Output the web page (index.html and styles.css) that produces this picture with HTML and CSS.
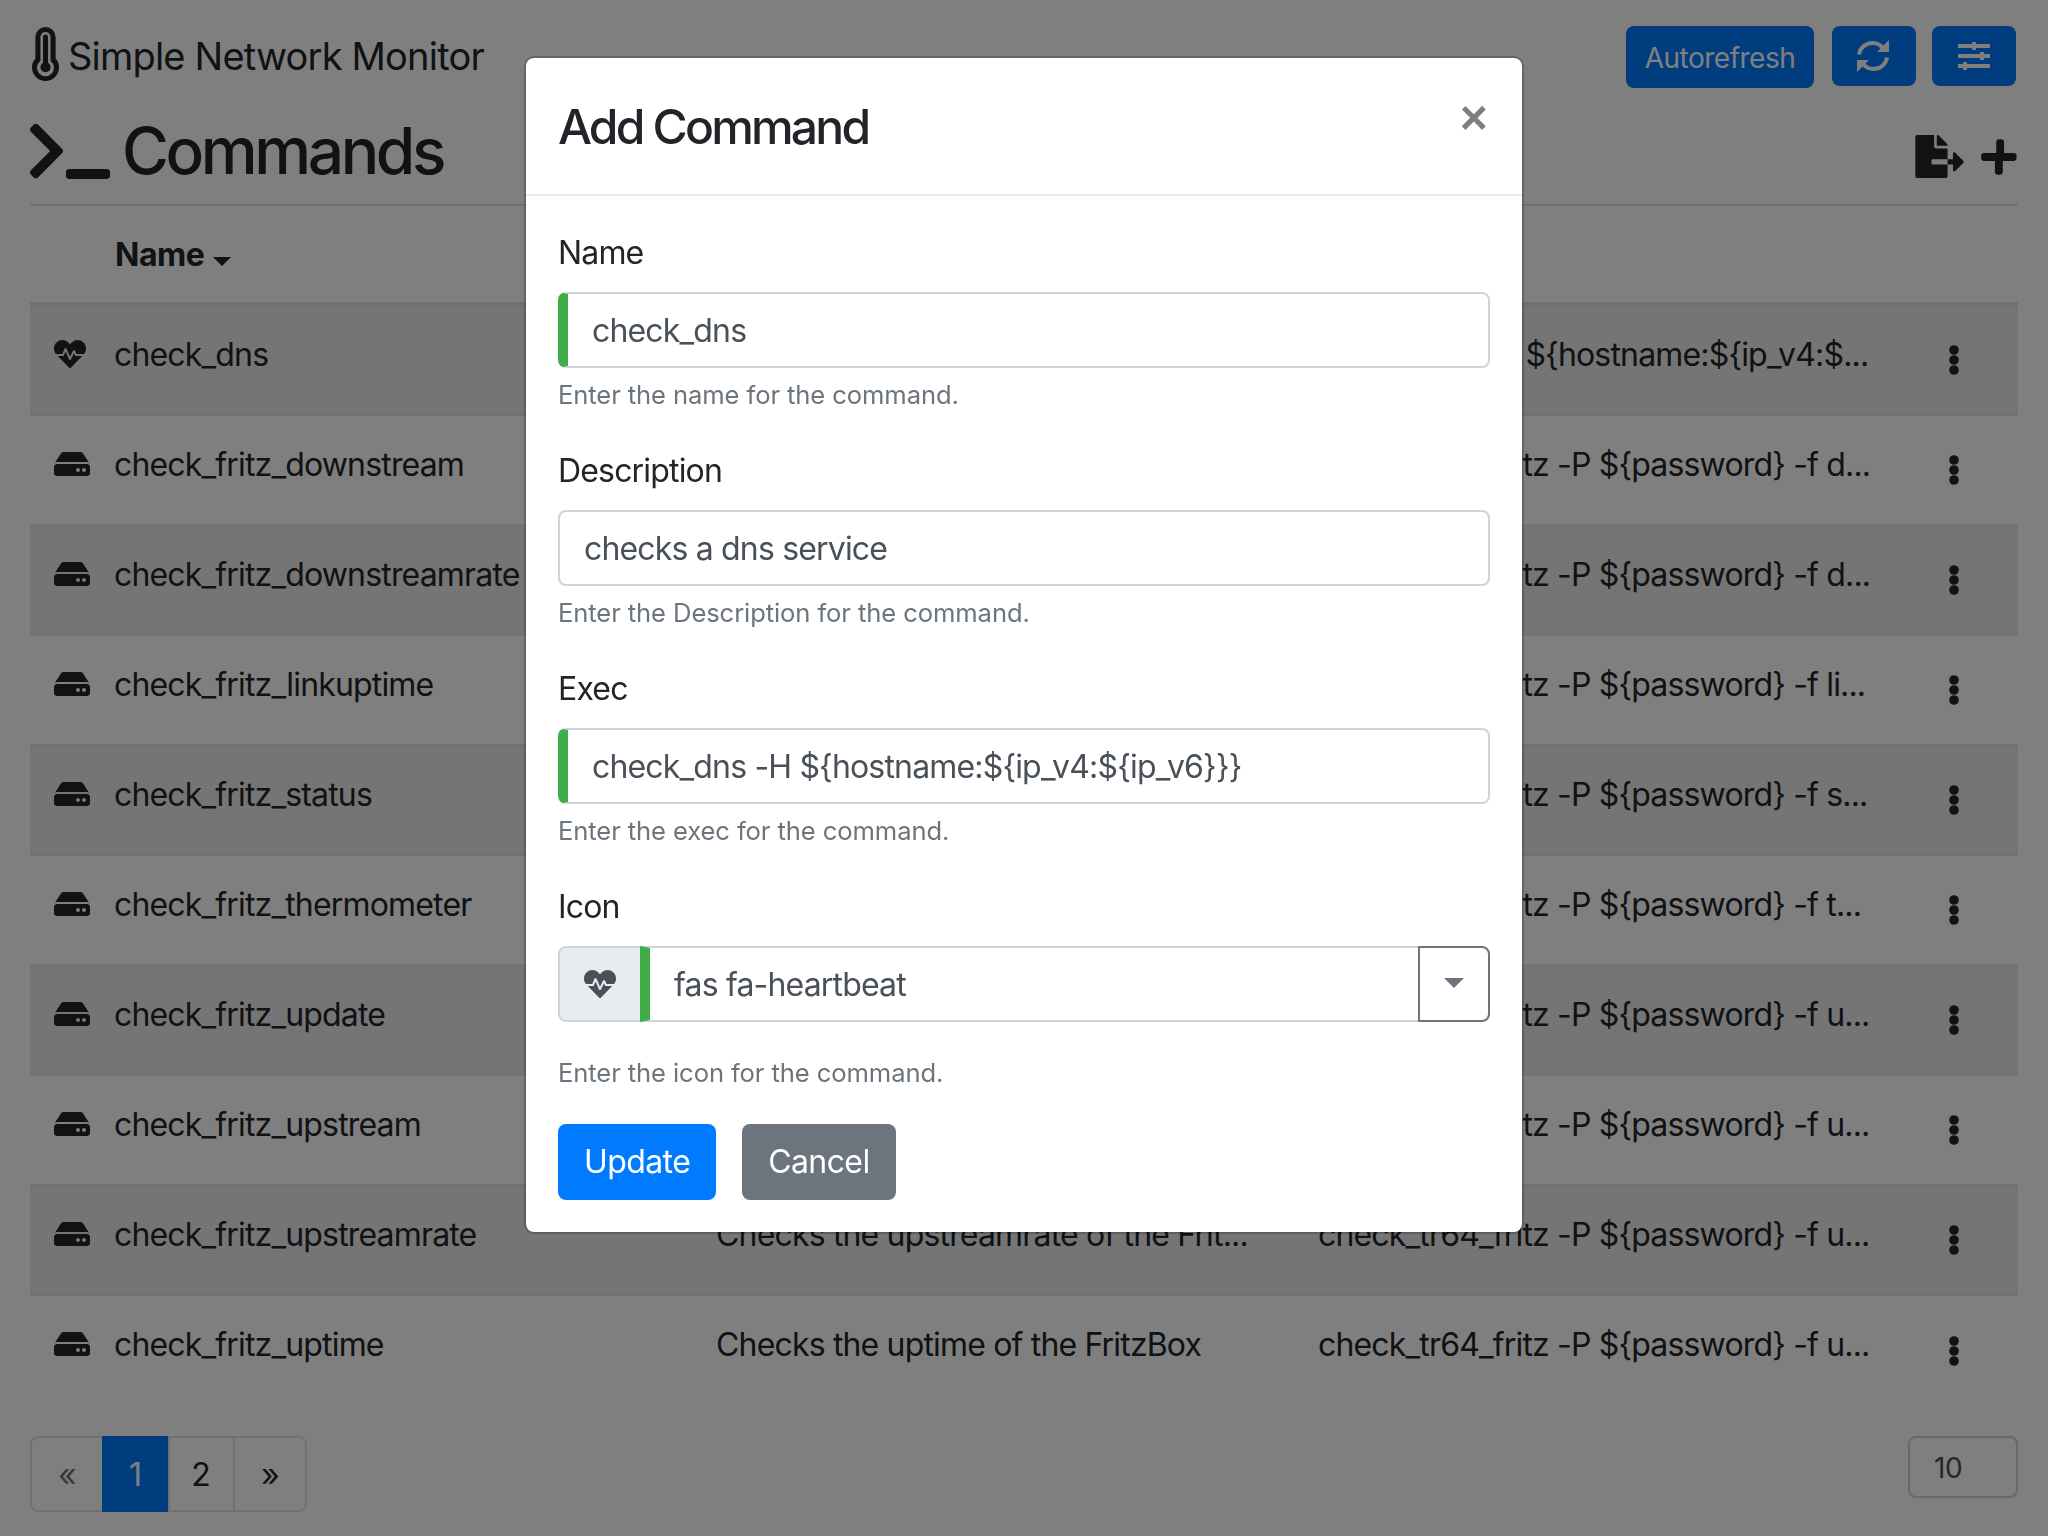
FILE: index.html
```html
<!DOCTYPE html>
<html lang="en">
<head>
  <meta charset="UTF-8" />
  <title>Simple Network Monitor</title>
  <link rel="stylesheet" href="styles.css">
</head>
<body>
  <svg class="icon-defs" width="0" height="0">
    <symbol id="i-heartbeat" viewBox="0 0 512 512"><path d="M320.2 243.8l-49.7 99.4c-6 12.1-23.4 11.7-28.9-.6l-56.9-126.3-30 71.7H60.6l182.5 186.5c7.1 7.3 18.6 7.3 25.7 0L451.4 288H342.3l-22.1-44.2zM473.7 73.9l-2.4-2.5c-51.5-52.6-135.8-52.6-187.4 0L256 100l-27.9-28.5c-51.5-52.7-135.9-52.7-187.4 0l-2.4 2.4C-10.4 123.7-12.5 203 31 256h102.4l35.9-86.2c5.4-12.9 23.6-13.2 29.4-.4l58.2 129.3 49-97.9c5.9-11.8 22.7-11.8 28.6 0l27.6 55.2H481c43.5-53 41.4-132.3-7.3-182.1z"/></symbol>
    <symbol id="i-hdd" viewBox="0 0 576 512"><path d="M576 304v96c0 26.51-21.49 48-48 48H48c-26.51 0-48-21.49-48-48v-96c0-26.51 21.49-48 48-48h480c26.51 0 48 21.49 48 48zm-48-80a79.557 79.557 0 0 1 30.777 6.165L462.25 85.374A48.003 48.003 0 0 0 422.311 64H153.689a48 48 0 0 0-39.938 21.374L17.223 230.165A79.557 79.557 0 0 1 48 224h480zm-48 96c-17.673 0-32 14.327-32 32s14.327 32 32 32 32-14.327 32-32-14.327-32-32-32zm-96 0c-17.673 0-32 14.327-32 32s14.327 32 32 32 32-14.327 32-32-14.327-32-32-32z"/></symbol>
    <symbol id="i-dots" viewBox="0 0 10 30"><circle cx="5" cy="5" r="4.8"/><circle cx="5" cy="15" r="4.8"/><circle cx="5" cy="25" r="4.8"/></symbol>
  </svg>

  <header class="navbar">
    <div class="brand">
      <svg class="brand-icon" viewBox="0 0 256 512"><path fill-rule="evenodd" d="M224 96a96 96 0 0 0-192 0V299A128 128 0 1 0 224 299ZM176 96a48 48 0 0 0-96 0V322A80 80 0 1 0 176 322ZM104 96a24 24 0 0 1 48 0V340A48 48 0 1 1 104 340Z"/></svg>
      <span class="brand-name">Simple Network Monitor</span>
    </div>
    <div class="nav-buttons">
      <button class="btn btn-nav btn-text">Autorefresh</button>
      <button class="btn btn-nav btn-icon">
        <svg class="nav-sync" viewBox="0 0 34 32"><path class="stroke" d="M3 14.5C4 8 9.500 3 16.500 3c4.500 0 8 2 10.500 5M31 17.500C30 24 24.500 29 17.500 29c-4.500 0-8-2-10.500-5"/><path class="fill" d="M33 0v12H21zM1 32V20h12z"/></svg>
      </button>
      <button class="btn btn-nav btn-icon">
        <svg class="nav-sliders" viewBox="0 0 32 28"><path class="fill" d="M0 2h32v4H0zM0 12h32v4H0zM0 22h32v4H0zM14 0h4v8h-4zM22 10h4v8h-4zM5 20h4v8H5z"/></svg>
      </button>
    </div>
  </header>

  <main class="content">
    <div class="page-head">
      <h1 class="page-title">
        <svg class="title-icon" viewBox="0 0 640 512"><path d="M257.981 272.971L63.638 467.314c-9.373 9.373-24.569 9.373-33.941 0L7.029 444.647c-9.357-9.357-9.375-24.522-.04-33.901L161.011 256 6.99 101.255c-9.335-9.379-9.317-24.544.04-33.901l22.667-22.667c9.373-9.373 24.569-9.373 33.941 0L257.981 239.03c9.373 9.372 9.373 24.568 0 33.941zM640 456v-32c0-13.255-10.745-24-24-24H312c-13.255 0-24 10.745-24 24v32c0 13.255 10.745 24 24 24h304c13.255 0 24-10.745 24-24z"/></svg>
        Commands
      </h1>
      <div class="page-tools">
        <svg class="tool-export" viewBox="0 0 576 512"><path d="M384 121.9c0-6.3-2.500-12.400-7-16.900L279.100 7c-4.500-4.500-10.600-7-17-7H256v128h128zM571 308l-95.700-96.400c-10.100-10.100-27.400-3-27.400 11.300V288h-64v64h64v65.200c0 14.300 17.300 21.400 27.400 11.300L571 332c6.600-6.600 6.600-17.400 0-24zm-379 28v-32c0-8.800 7.200-16 16-16h176V160H248c-13.200 0-24-10.800-24-24V0H24C10.700 0 0 10.700 0 24v464c0 13.300 10.700 24 24 24h336c13.300 0 24-10.700 24-24V352H208c-8.800 0-16-7.200-16-16z"/></svg>
        <svg class="tool-plus" viewBox="0 0 448 512"><path d="M416 208H280V72c0-17.670-14.330-32-32-32h-32c-17.670 0-32 14.330-32 32v136H32c-17.670 0-32 14.330-32 32v32c0 17.670 14.330 32 32 32h136v136c0 17.670 14.330 32 32 32h32c17.670 0 32-14.330 32-32V304h136c17.670 0 32-14.330 32-32v-32c0-17.670-14.330-32-32-32z"/></svg>
      </div>
    </div>

    <table class="table">
      <colgroup>
        <col class="col-icon"><col class="col-name"><col class="col-desc"><col class="col-exec"><col class="col-actions">
      </colgroup>
      <thead>
        <tr><th></th><th>Name <span class="sort-caret"></span></th><th></th><th></th><th></th></tr>
      </thead>
      <tbody>
        <tr>
          <td class="cell-icon"><svg class="icon-heart"><use href="#i-heartbeat"/></svg></td>
          <td class="cell-name">check_dns</td><td>Checks a dns service</td><td>check_dns -H ${hostname:${ip_v4:$...</td>
          <td class="cell-actions"><svg class="icon-dots"><use href="#i-dots"/></svg></td>
        </tr>
        <tr>
          <td class="cell-icon"><svg class="icon-hdd"><use href="#i-hdd"/></svg></td>
          <td class="cell-name">check_fritz_downstream</td><td>Checks the downstream of the FritzBox</td><td>check_tr64_fritz -P ${password} -f d...</td>
          <td class="cell-actions"><svg class="icon-dots"><use href="#i-dots"/></svg></td>
        </tr>
        <tr>
          <td class="cell-icon"><svg class="icon-hdd"><use href="#i-hdd"/></svg></td>
          <td class="cell-name">check_fritz_downstreamrate</td><td>Checks the downstreamrate of the Frit...</td><td>check_tr64_fritz -P ${password} -f d...</td>
          <td class="cell-actions"><svg class="icon-dots"><use href="#i-dots"/></svg></td>
        </tr>
        <tr>
          <td class="cell-icon"><svg class="icon-hdd"><use href="#i-hdd"/></svg></td>
          <td class="cell-name">check_fritz_linkuptime</td><td>Checks the linkuptime of the FritzBox</td><td>check_tr64_fritz -P ${password} -f li...</td>
          <td class="cell-actions"><svg class="icon-dots"><use href="#i-dots"/></svg></td>
        </tr>
        <tr>
          <td class="cell-icon"><svg class="icon-hdd"><use href="#i-hdd"/></svg></td>
          <td class="cell-name">check_fritz_status</td><td>Checks the status of the FritzBox</td><td>check_tr64_fritz -P ${password} -f s...</td>
          <td class="cell-actions"><svg class="icon-dots"><use href="#i-dots"/></svg></td>
        </tr>
        <tr>
          <td class="cell-icon"><svg class="icon-hdd"><use href="#i-hdd"/></svg></td>
          <td class="cell-name">check_fritz_thermometer</td><td>Checks the temperature of the FritzBox</td><td>check_tr64_fritz -P ${password} -f t...</td>
          <td class="cell-actions"><svg class="icon-dots"><use href="#i-dots"/></svg></td>
        </tr>
        <tr>
          <td class="cell-icon"><svg class="icon-hdd"><use href="#i-hdd"/></svg></td>
          <td class="cell-name">check_fritz_update</td><td>Checks for updates of the FritzBox</td><td>check_tr64_fritz -P ${password} -f u...</td>
          <td class="cell-actions"><svg class="icon-dots"><use href="#i-dots"/></svg></td>
        </tr>
        <tr>
          <td class="cell-icon"><svg class="icon-hdd"><use href="#i-hdd"/></svg></td>
          <td class="cell-name">check_fritz_upstream</td><td>Checks the upstream of the FritzBox</td><td>check_tr64_fritz -P ${password} -f u...</td>
          <td class="cell-actions"><svg class="icon-dots"><use href="#i-dots"/></svg></td>
        </tr>
        <tr>
          <td class="cell-icon"><svg class="icon-hdd"><use href="#i-hdd"/></svg></td>
          <td class="cell-name">check_fritz_upstreamrate</td><td>Checks the upstreamrate of the Frit...</td><td>check_tr64_fritz -P ${password} -f u...</td>
          <td class="cell-actions"><svg class="icon-dots"><use href="#i-dots"/></svg></td>
        </tr>
        <tr>
          <td class="cell-icon"><svg class="icon-hdd"><use href="#i-hdd"/></svg></td>
          <td class="cell-name">check_fritz_uptime</td><td>Checks the uptime of the FritzBox</td><td>check_tr64_fritz -P ${password} -f u...</td>
          <td class="cell-actions"><svg class="icon-dots"><use href="#i-dots"/></svg></td>
        </tr>
      </tbody>
    </table>

    <div class="table-foot">
      <ul class="pagination">
        <li class="page-link page-prev">«</li>
        <li class="page-link page-one">1</li>
        <li class="page-link page-two">2</li>
        <li class="page-link page-next">»</li>
      </ul>
      <select class="per-page"><option>10</option></select>
    </div>
  </main>

  <div class="backdrop">
    <div class="modal">
      <div class="modal-header">
        <h5 class="modal-title">Add Command</h5>
        <span class="close">×</span>
      </div>
      <form class="modal-body">
        <div class="form-group">
          <label class="form-label">Name</label>
          <input class="form-control is-valid" type="text" value="check_dns" readonly>
          <small class="form-hint">Enter the name for the command.</small>
        </div>
        <div class="form-group">
          <label class="form-label">Description</label>
          <input class="form-control" type="text" value="checks a dns service" readonly>
          <small class="form-hint">Enter the Description for the command.</small>
        </div>
        <div class="form-group">
          <label class="form-label">Exec</label>
          <input class="form-control is-valid" type="text" value="check_dns -H ${hostname:${ip_v4:${ip_v6}}}" readonly>
          <small class="form-hint">Enter the exec for the command.</small>
        </div>
        <div class="form-group">
          <label class="form-label">Icon</label>
          <div class="input-group">
            <span class="input-prepend"><svg class="icon-heart"><use href="#i-heartbeat"/></svg></span>
            <input class="form-control is-valid in-group" type="text" value="fas fa-heartbeat" readonly>
            <span class="input-toggle"><span class="toggle-caret"></span></span>
          </div>
          <small class="form-hint hint-spaced">Enter the icon for the command.</small>
        </div>
        <div class="form-actions">
          <button class="btn btn-primary" type="button">Update</button>
          <button class="btn btn-secondary" type="button">Cancel</button>
        </div>
      </form>
    </div>
  </div>
</body>
</html>
```

FILE: styles.css
```css
* { box-sizing: border-box; }
html { background: #fff; }
body { margin: 0; min-height: 1536px; font-family: Inter, "Liberation Sans", sans-serif; font-size: 32px; line-height: 1.5; color: #212529; letter-spacing: -0.83px; }
svg { fill: currentColor; display: block; }
.icon-defs { position: absolute; }

.btn { border: 2px solid transparent; border-radius: 8px; font: inherit; letter-spacing: -0.6px; color: #fff; padding: 12px 24px; height: 76px; }
.btn-primary { background: #007bff; }
.btn-secondary { background: #6c757d; }

/* top bar */
.navbar { display: flex; justify-content: space-between; height: 110px; padding: 26px 32px 0 32px; }
.brand { display: flex; gap: 9px; height: 56px; align-items: flex-start; }
.brand-icon { width: 27px; height: 54px; margin-top: 1px; }
.brand-name { font-size: 38px; line-height: 56px; margin-top: 2px; letter-spacing: -0.8px; }
.nav-buttons { display: flex; align-items: flex-start; gap: 16px; }
.btn-nav { background: #007bff; padding: 0; display: flex; align-items: center; justify-content: center; }
.btn-text { width: 188px; height: 62px; padding-top: 2px; font-size: 28px; letter-spacing: -0.5px; margin-right: 2px; }
.btn-icon { width: 84px; height: 60px; }
.nav-sync { width: 34px; height: 32px; margin-left: -2px; }
.nav-sync .stroke { fill: none; stroke: currentColor; stroke-width: 4; }
.nav-sliders { width: 32px; height: 28px; }

.content { padding: 0 30px; }
.page-head { display: flex; justify-content: space-between; align-items: flex-start; height: 96px; border-bottom: 2px solid #dee2e6; }
.page-title { display: flex; align-items: center; gap: 12px; margin: 0; font-size: 64px; font-weight: 500; line-height: 82px; letter-spacing: -3.4px; }
.title-icon { width: 80px; height: 64px; }
.page-tools { display: flex; align-items: center; gap: 17px; padding-top: 25px; }
.tool-export { width: 49px; height: 43px; }
.tool-plus { width: 37px; height: 42px; }

.table { width: 100%; table-layout: fixed; border-collapse: separate; border-spacing: 0; }
.col-icon { width: 61px; }
.col-name { width: 601px; }
.col-desc { width: 602px; }
.col-exec { width: 616px; }
.col-actions { width: 108px; }
.table th { height: 100px; padding: 25px 24px 23px; text-align: left; font-weight: 700; letter-spacing: -0.5px; border-bottom: 4px solid #dee2e6; }
.table td { height: 110px; padding: 25px 24px 23px; vertical-align: top; white-space: nowrap; border-bottom: 2px solid #dee2e6; }
.table td.cell-name { padding-left: 23px; }
.table tr:last-child td { border-bottom: 0; }
.table tbody tr:nth-child(odd) { background: rgba(0, 0, 0, 0.08); }
.sort-caret { display: inline-block; width: 0; height: 0; margin-left: 2px; vertical-align: 0; border: 9px solid transparent; border-top-color: #212529; border-bottom: 0; }
.table td.cell-icon { padding: 32px 0 0 24px; }
.icon-heart { width: 32px; height: 32px; }
.icon-hdd { width: 36px; height: 32px; }
.table td.cell-actions { padding: 0 0 0 39px; vertical-align: middle; }
.icon-dots { width: 10px; height: 30px; }

.table-foot { display: flex; justify-content: space-between; align-items: flex-start; margin-top: 30px; }
.pagination { display: flex; list-style: none; margin: 0; padding: 0; }
.page-link { height: 76px; border: 2px solid #dee2e6; margin-left: -2px; text-align: center; line-height: 74px; }
.page-prev { width: 74px; margin-left: 0; color: #6c757d; border-radius: 8px 0 0 8px; }
.page-one { width: 68px; padding-right: 2px; background: #007bff; border-color: #007bff; color: #fff; }
.page-two { width: 67px; padding-right: 2px; }
.page-next { width: 74px; border-radius: 0 8px 8px 0; }
.per-page { appearance: none; width: 110px; height: 62px; padding: 2px 24px 0; font: inherit; font-size: 28px; letter-spacing: -0.5px; color: #495057; background: #fff; border: 2px solid #ced4da; border-radius: 8px; }

/* modal */
.backdrop { position: fixed; inset: 0; background: rgba(0, 0, 0, 0.5); }
.modal { position: absolute; top: 56px; left: 524px; width: 1000px; background: #fff; background-clip: padding-box; border: 2px solid rgba(0, 0, 0, 0.2); border-radius: 10px; }
.modal-header { display: flex; justify-content: space-between; padding: 32px; border-bottom: 2px solid #e9ecef; }
.modal-title { margin: 0; padding-top: 2px; height: 72px; font-size: 48px; font-weight: 500; line-height: 70px; letter-spacing: -2.8px; }
.close { font-size: 48px; font-weight: 700; line-height: 48px; color: #000; opacity: 0.5; margin: 4px 3px 0 0; font-family: "Liberation Sans", sans-serif; }
.modal-body { padding: 32px; }
.form-group { margin-bottom: 32px; }
.form-label { display: block; height: 48px; padding-top: 1px; margin-bottom: 16px; line-height: 48px; }
.form-control { display: block; width: 100%; height: 76px; padding: 12px 24px; font: inherit; letter-spacing: inherit; color: #495057; background: #fff; border: 2px solid #ced4da; border-radius: 8px; outline: 0; }
.is-valid { border-left: 10px solid #41ad49; }
.form-hint { display: block; margin-top: 8px; font-size: 25.6px; line-height: 38px; color: #6c757d; letter-spacing: -0.1px; }
.hint-spaced { margin-top: 32px; }
.input-group { display: flex; height: 76px; }
.input-prepend { width: 82px; display: flex; align-items: center; justify-content: center; background: #e9ecef; color: #495057; border: 2px solid #ced4da; border-right: 0; border-radius: 8px 0 0 8px; }
.in-group { flex: 1; min-width: 0; border-radius: 0; border-right: 0; }
.input-toggle { width: 72px; display: flex; align-items: center; justify-content: center; border: 2px solid #6c757d; border-radius: 0 8px 8px 0; }
.toggle-caret { width: 0; height: 0; border: 10px solid transparent; border-top-color: #6c757d; border-bottom: 0; margin-bottom: 2px; }
.form-actions { display: flex; gap: 26px; }
```
